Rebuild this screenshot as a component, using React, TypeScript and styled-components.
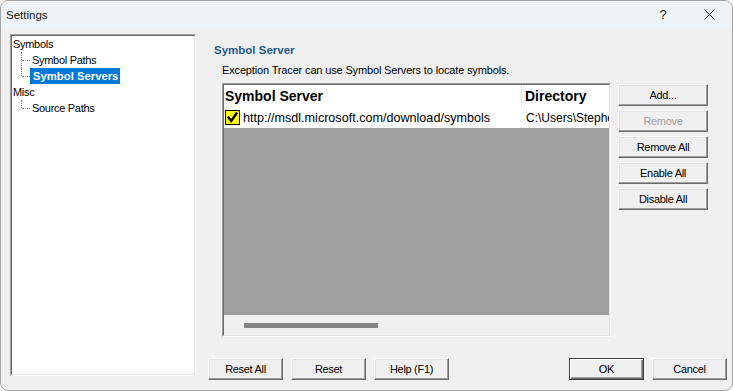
import styled, { createGlobalStyle } from "styled-components";

const GlobalStyle = createGlobalStyle`
  html, body {
    margin: 0;
    padding: 0;
    background: #ffffff;
  }
  * {
    box-sizing: border-box;
  }
`;

const servers = [
  {
    url: "http://msdl.microsoft.com/download/symbols",
    dir: "C:\\Users\\Stephen\\AppData\\Local\\Symbols",
    enabled: true,
  },
];

const CheckIcon = () => (
  <svg width="13" height="13" viewBox="0 0 13 13">
    <path d="M2.5 6.5 L5.2 10 L10.5 2.5" fill="none" stroke="#000" strokeWidth="2.4" strokeLinecap="square" />
  </svg>
);

const CloseIcon = () => (
  <svg width="11" height="11" viewBox="0 0 11 11">
    <path d="M0.5 0.5 L10.5 10.5 M10.5 0.5 L0.5 10.5" stroke="#1a1a1a" strokeWidth="1" />
  </svg>
);

const App = () => {
  return (
    <>
      <GlobalStyle />
      <Window>
        <TitleBar>
          <Title>Settings</Title>
          <TitleButton>?</TitleButton>
          <TitleButton>
            <CloseIcon />
          </TitleButton>
        </TitleBar>
        <Body>
          <TreeFrame>
            <TreeInner>
              <TreeRow>
                <TreeLabel root>Symbols</TreeLabel>
              </TreeRow>
              <TreeRow>
                <Connector />
                <TreeLabel>Symbol Paths</TreeLabel>
              </TreeRow>
              <TreeRow>
                <Connector last />
                <TreeLabel selected>Symbol Servers</TreeLabel>
              </TreeRow>
              <TreeRow>
                <TreeLabel root>Misc</TreeLabel>
              </TreeRow>
              <TreeRow>
                <Connector last />
                <TreeLabel>Source Paths</TreeLabel>
              </TreeRow>
            </TreeInner>
          </TreeFrame>

          <RightColumn>
            <Panel>
              <Heading>Symbol Server</Heading>
              <Description>Exception Tracer can use Symbol Servers to locate symbols.</Description>
              <ListArea>
                <ListFrame>
                  <ListInner>
                    <HeaderRow>
                      <HeaderCell width={298}>Symbol Server</HeaderCell>
                      <HeaderCell>Directory</HeaderCell>
                    </HeaderRow>
                    {servers.map((s) => (
                      <ItemRow key={s.url}>
                        <UrlCell>
                          <CheckBox>{s.enabled && <CheckIcon />}</CheckBox>
                          {s.url}
                        </UrlCell>
                        <DirCell>{s.dir}</DirCell>
                      </ItemRow>
                    ))}
                    <EmptySpace />
                    <ScrollTrack>
                      <ScrollThumb />
                    </ScrollTrack>
                  </ListInner>
                </ListFrame>
                <SideButtons>
                  <Button>Add...</Button>
                  <Button disabled>Remove</Button>
                  <Button>Remove All</Button>
                  <Button>Enable All</Button>
                  <Button>Disable All</Button>
                </SideButtons>
              </ListArea>
            </Panel>
            <Footer>
              <Button small>Reset All</Button>
              <Button small>Reset</Button>
              <Button small>Help (F1)</Button>
              <Spacer />
              <Button small primary>OK</Button>
              <Button small>Cancel</Button>
            </Footer>
          </RightColumn>
        </Body>
      </Window>
    </>
  );
};

const Window = styled.div`
  width: 733px;
  height: 391px;
  display: flex;
  flex-direction: column;
  border: 1px solid #a3a3a3;
  border-radius: 8px;
  overflow: hidden;
  background: #f0f0f0;
  font-family: "Liberation Sans", Arial, sans-serif;
  color: #000;
`;

const TitleBar = styled.div`
  height: 27px;
  flex: none;
  display: flex;
  align-items: center;
  padding-left: 5px;
  background: #eef3f8;
`;

const Title = styled.div`
  flex: 1;
  font-size: 11.5px;
  color: #1a1a1a;
`;

const TitleButton = styled.div`
  width: 46px;
  height: 27px;
  display: flex;
  align-items: center;
  justify-content: center;
  font-size: 13px;
  color: #1a1a1a;
`;

const Body = styled.div`
  flex: 1;
  display: flex;
  padding: 6px 5px 10px 9px;
`;

const TreeFrame = styled.div`
  width: 186px;
  margin-bottom: 4px;
  border: 1px solid;
  border-color: #a0a0a0 #ffffff #ffffff #a0a0a0;
`;

const TreeInner = styled.div`
  height: 100%;
  background: #ffffff;
  border: 1px solid;
  border-color: #696969 #e3e3e3 #e3e3e3 #696969;
`;

const TreeRow = styled.div`
  height: 16px;
  display: flex;
  align-items: center;
`;

const Connector = styled.span<{ last?: boolean }>`
  position: relative;
  width: 9px;
  height: 16px;
  margin-left: 9px;
  flex: none;

  &::before {
    content: "";
    position: absolute;
    left: 0;
    top: 0;
    height: ${(p) => (p.last ? "8px" : "16px")};
    border-left: 1px dotted #808080;
  }

  &::after {
    content: "";
    position: absolute;
    left: 1px;
    top: 8px;
    width: 8px;
    border-top: 1px dotted #808080;
  }
`;

const TreeLabel = styled.span<{ selected?: boolean; root?: boolean }>`
  height: 16px;
  line-height: 16px;
  padding: 0 2px 0 ${(p) => (p.root ? "1px" : p.selected ? "3px" : "2px")};
  font-size: ${(p) => (p.selected ? "11.3px" : "11px")};
  font-weight: ${(p) => (p.selected ? "bold" : "normal")};
  letter-spacing: ${(p) => (p.selected ? "0" : "-0.3px")};
  background: ${(p) => (p.selected ? "#0078d7" : "transparent")};
  color: ${(p) => (p.selected ? "#ffffff" : "#000000")};
`;

const RightColumn = styled.div`
  flex: 1;
  margin-left: 12px;
  display: flex;
  flex-direction: column;
`;

const Panel = styled.div`
  flex: 1;
  padding-left: 6px;
`;

const Heading = styled.div`
  margin-top: 9px;
  line-height: 14px;
  font-size: 11.5px;
  font-weight: bold;
  color: #1f5a8e;
`;

const Description = styled.div`
  margin: 6px 0 0 8px;
  line-height: 14px;
  font-size: 11px;
  letter-spacing: -0.15px;
`;

const ListArea = styled.div`
  display: flex;
  align-items: flex-start;
  gap: 7px;
  margin: 6px 0 0 8px;
`;

const ListFrame = styled.div`
  width: 389px;
  height: 254px;
  border: 1px solid;
  border-color: #a0a0a0 #ffffff #ffffff #a0a0a0;
`;

const ListInner = styled.div`
  height: 100%;
  display: flex;
  flex-direction: column;
  overflow: hidden;
  border: 1px solid;
  border-color: #696969 #e3e3e3 #e3e3e3 #696969;
  background: #a0a0a0;
`;

const HeaderRow = styled.div`
  height: 22px;
  flex: none;
  display: flex;
  background: #ffffff;
`;

const HeaderCell = styled.div<{ width?: number }>`
  width: ${(p) => (p.width ? `${p.width}px` : "auto")};
  flex: ${(p) => (p.width ? "none" : "1")};
  padding-left: ${(p) => (p.width ? "1px" : "3px")};
  border-right: ${(p) => (p.width ? "1px solid #e5e5e5" : "none")};
  line-height: 22px;
  font-size: 14px;
  font-weight: bold;
  white-space: nowrap;
  overflow: hidden;
`;

const ItemRow = styled.div`
  height: 21px;
  flex: none;
  display: flex;
  align-items: center;
  background: #ffffff;
  font-size: 12.6px;
  white-space: nowrap;
`;

const UrlCell = styled.div`
  width: 298px;
  flex: none;
  display: flex;
  align-items: center;
  gap: 3px;
  padding-left: 1px;
`;

const CheckBox = styled.span`
  width: 15px;
  height: 15px;
  flex: none;
  display: flex;
  align-items: center;
  justify-content: center;
  background: #ffff00;
  border: 1px solid #000000;
`;

const DirCell = styled.div`
  flex: 1;
  padding-left: 4px;
  overflow: hidden;
  font-size: 12px;
`;

const EmptySpace = styled.div`
  flex: 1;
`;

const ScrollTrack = styled.div`
  height: 20px;
  flex: none;
  padding: 8px 0 0 20px;
  background: #f0f0f0;
`;

const ScrollThumb = styled.div`
  width: 134px;
  height: 5px;
  background: #858585;
`;

const SideButtons = styled.div`
  display: flex;
  flex-direction: column;
  gap: 4px;
  margin-top: 1px;
`;

const Button = styled.button<{ small?: boolean; primary?: boolean }>`
  width: ${(p) => (p.small ? "75px" : "90px")};
  height: 22px;
  padding: 0;
  font-family: "Liberation Sans", Arial, sans-serif;
  font-size: 11px;
  letter-spacing: -0.3px;
  color: #000000;
  background: #f0f0f0;
  border: 1px solid;
  border-color: ${(p) => (p.primary ? "#404040" : "#ffffff #696969 #696969 #ffffff")};
  box-shadow: ${(p) =>
    p.primary
      ? "inset 1px 1px #ffffff, inset -1px -1px #696969, inset -2px -2px #a0a0a0"
      : "inset -1px -1px #a0a0a0, inset 1px 1px #e3e3e3"};

  &:disabled {
    color: #a0a0a0;
  }
`;

const Footer = styled.div`
  display: flex;
  gap: 8px;
  flex: none;
`;

const Spacer = styled.div`
  flex: 1;
`;

export default App;
